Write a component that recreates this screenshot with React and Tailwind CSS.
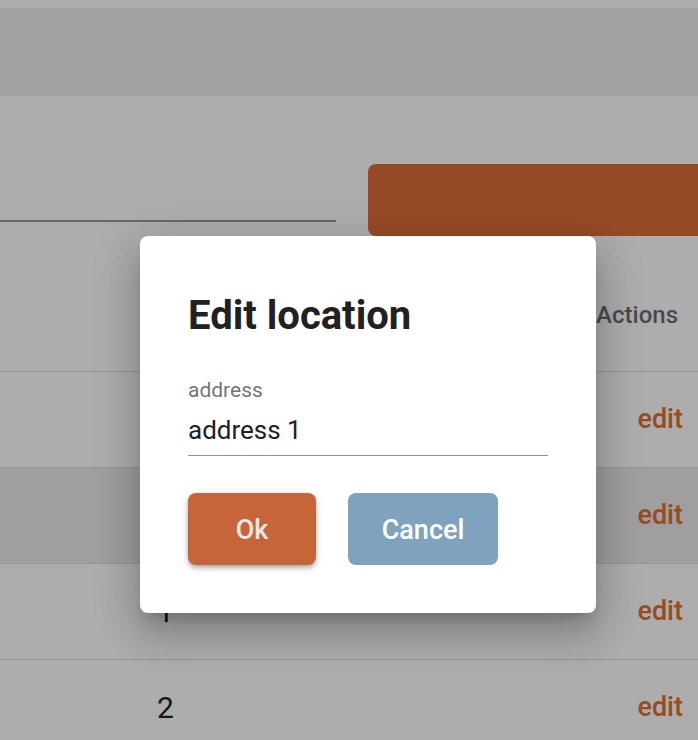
export default function App() {
  const rows = [
    { n: '', hover: false },
    { n: '', hover: true },
    { n: '1', hover: false },
    { n: '2', hover: false },
  ]

  return (
    <div className="relative h-[740px] w-[698px] overflow-hidden bg-white font-['Roboto',sans-serif]">
      {/* page behind the dialog */}
      <div className="h-2" />
      <div className="h-[88px] bg-[#ebedf0]" />

      <div className="flex h-[140px] items-start gap-8 pt-[68px]">
        <div className="h-[58px] w-[336px] shrink-0 border-b-2 border-[#9a9a9a]" />
        <div className="h-[72px] w-[360px] shrink-0 rounded-lg bg-[#df6e39]" />
      </div>

      <div className="mt-[22px] flex h-[113px] items-center justify-end pr-[20px]">
        <span className="text-[24px] font-medium text-[#6e6e6e]">Actions</span>
      </div>
      {rows.map((r, i) => (
        <div key={i}
          className={`flex h-[96px] items-center border-t border-[#dcdcdc] pr-[15px] ${r.hover ? 'bg-[#eaeaea]' : ''}`}>
          <span className="w-[330px] pl-[157px] text-[30px] leading-[32px] text-[#222]">{r.n}</span>
          <span className="ml-auto text-[27px] font-medium text-[#df6e39]">edit</span>
        </div>
      ))}

      {/* backdrop */}
      <div className="absolute inset-0 bg-black/[0.32]" />

      {/* dialog */}
      <div className="absolute left-[140px] top-[236px] h-[377px] w-[456px] rounded-lg bg-white pl-[48px] pt-[56px] shadow-[0_11px_15px_-7px_rgba(0,0,0,0.2),0_24px_38px_3px_rgba(0,0,0,0.14),0_9px_46px_8px_rgba(0,0,0,0.12)]">
        <h2 className="text-[40px] font-bold leading-[48px] text-[#212121]">Edit location</h2>

        <div className="mt-[38px] w-[360px] border-b border-[#949494] pb-[9px]">
          <div className="text-[21px] leading-[24px] text-[#757575]">address</div>
          <div className="mt-3 text-[26px] leading-[32px] text-[#212121]">address 1</div>
        </div>

        <div className="mt-[37px] flex gap-8">
          <button className="h-[72px] w-[128px] rounded-lg bg-[#c6653a] pt-[3px] text-[27px] font-medium text-[#e8e8e8] shadow-[0_2px_4px_-1px_rgba(0,0,0,0.2),0_4px_5px_0_rgba(0,0,0,0.14),0_1px_10px_0_rgba(0,0,0,0.12)]">
            Ok
          </button>
          <button className="h-[72px] w-[150px] rounded-lg bg-[#7fa3be] pt-[3px] text-[27px] font-medium text-white">
            Cancel
          </button>
        </div>
      </div>
    </div>
  )
}
